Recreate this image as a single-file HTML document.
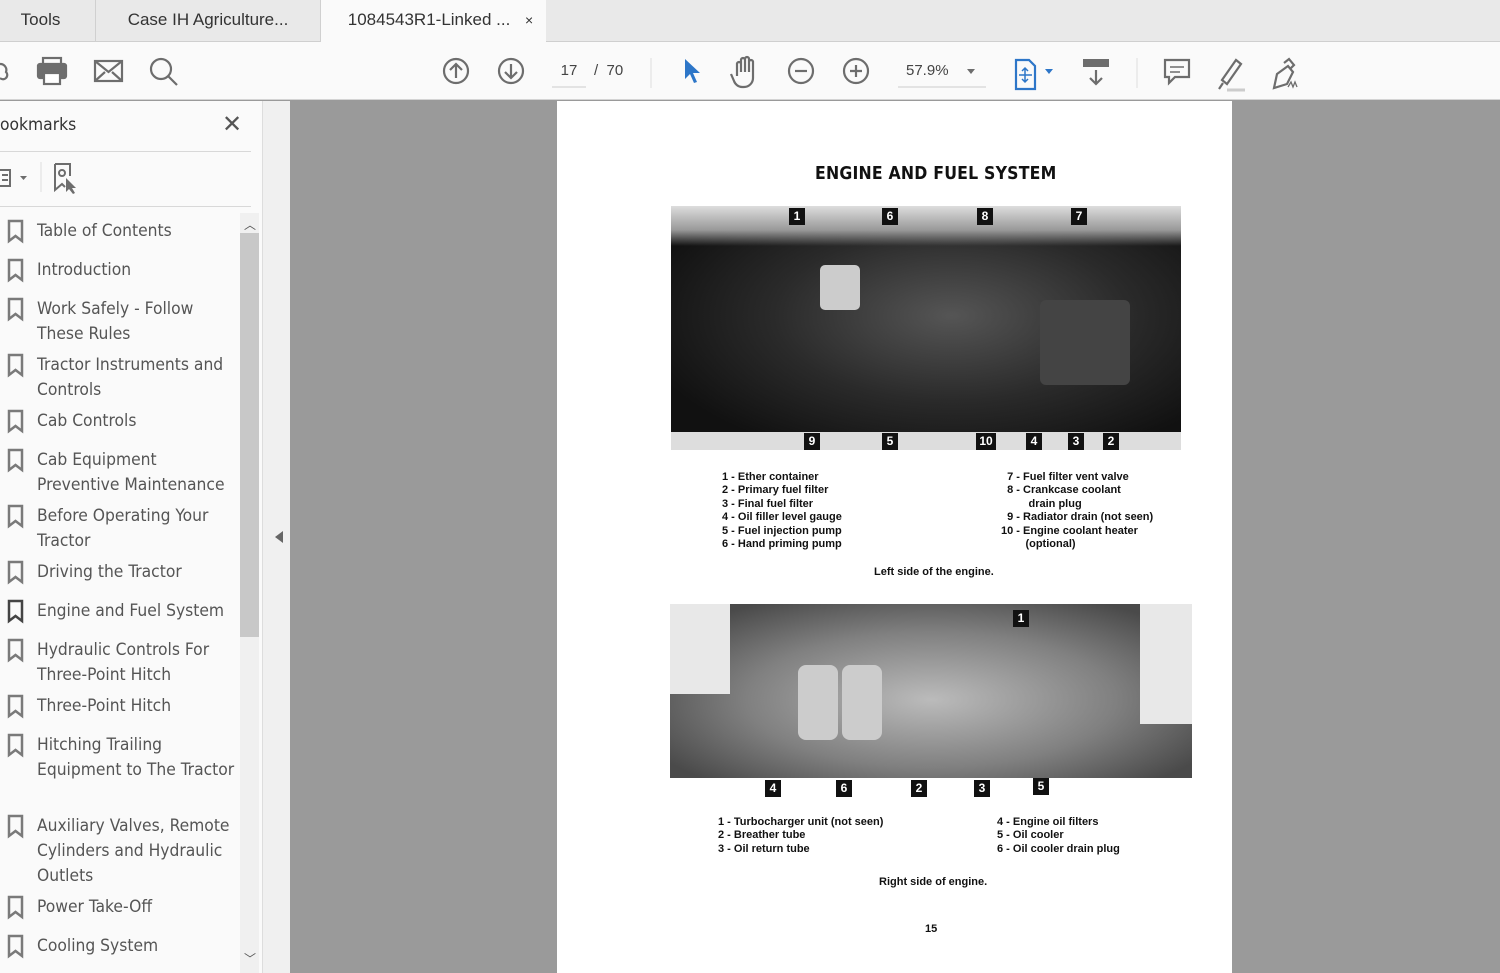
<!DOCTYPE html>
<html><head><meta charset="utf-8"><style>
*{margin:0;padding:0;box-sizing:border-box}
body{width:1500px;height:973px;overflow:hidden;background:#9a9a9a;font-family:"Liberation Sans",sans-serif;position:relative}
.abs{position:absolute}
#tabs{left:0;top:0;width:1500px;height:42px;background:#e9e9e9;border-bottom:1px solid #cfcfcf}
.tab{top:0;height:42px;font-size:17px;color:#333;line-height:40px;text-align:center}
#tool{left:0;top:42px;width:1500px;height:58px;background:#fafafa;border-bottom:1px solid #d4d4d4}
#side{left:0;top:101px;width:262px;height:872px;background:#fafafa}
#div{left:262px;top:101px;width:28px;height:872px;background:#f0f0f0;border-left:1px solid #ddd}
.bm{left:37px;font-size:17.3px;color:#555;line-height:25px;font-family:"DejaVu Sans Condensed","Liberation Sans",sans-serif;white-space:nowrap}
#page{left:557px;top:101px;width:675px;height:872px;background:#fff}
.cap{font-size:11px;font-weight:bold;color:#111;line-height:13.4px;white-space:pre;font-family:"Liberation Sans",sans-serif}
.num{width:16px;height:17px;background:#111;color:#fff;font-size:12px;font-weight:bold;text-align:center;line-height:17px}
</style></head><body>
<div id="tabs" class="abs"></div>
<div class="abs tab" style="left:0;width:96px;border-right:1px solid #d0d0d0;padding-right:14px">Tools</div>
<div class="abs tab" style="left:96px;width:225px;border-right:1px solid #d0d0d0">Case IH Agriculture...</div>
<div class="abs tab" style="left:321px;width:225px;background:#fafafa;height:43px;padding-left:14px">1084543R1-Linked ... <span style="font-size:14px;margin-left:10px">×</span></div>
<div id="tool" class="abs"></div>
<svg class="abs" style="left:0;top:42px" width="1500" height="58" fill="none" stroke="#6d6d6d" stroke-width="2.2">
<path d="M0 22 a6 6 0 0 1 6 8 a4 4 0 0 1 -6 6"/>
<rect x="38" y="22" width="28" height="14" rx="2" fill="#6d6d6d"/><rect x="43" y="16" width="18" height="7"/><rect x="44" y="31" width="16" height="11" fill="#fff"/>
<rect x="95" y="19" width="27" height="20"/><path d="M95 19 l13.5 11 l13.5 -11 M95 39 l10 -9 M122 39 l-10 -9"/>
<circle cx="161" cy="27" r="10"/><path d="M168 34 l9 9"/>
<circle cx="456" cy="29" r="12"/><path d="M456 36 v-14 M450 28 l6 -6 l6 6"/>
<circle cx="511" cy="29" r="12"/><path d="M511 22 v14 M505 30 l6 6 l6 -6"/>
<path d="M552 45 h34 M898 45 h88" stroke="#ccc" stroke-width="1"/>
<path d="M651 16 v30 M1137 16 v30" stroke="#ddd" stroke-width="1"/>
<path d="M685 17 l0 20 l5 -5 l4 9 l3 -1 l-4 -9 l7 0 z" fill="#2d76c8" stroke="none"/>
<path d="M737 34 v-12 a2 2 0 0 1 4 0 v8 v-12 a2 2 0 0 1 4 0 v12 v-13 a2 2 0 0 1 4 0 v13 v-10 a2 2 0 0 1 4 0 v16 a9 9 0 0 1 -9 9 h-2 a9 9 0 0 1 -8 -6 l-3 -7"/>
<circle cx="801" cy="29" r="12"/><path d="M795 29 h12"/>
<circle cx="856" cy="29" r="12"/><path d="M850 29 h12 M856 23 v12"/>
<path d="M967 27 h8 l-4 5 z" fill="#6d6d6d" stroke="none"/>
<path d="M1016 18 h13 l6 6 v23 h-19 z" stroke="#2d76c8"/><path d="M1025 26 v14 M1019 33 h13 M1022 29 l3 -3 l3 3 M1022 37 l3 3 l3 -3" stroke="#2d76c8" stroke-width="1.5"/>
<path d="M1045 27 h8 l-4 5 z" fill="#2d76c8" stroke="none"/>
<rect x="1083" y="17" width="26" height="8" fill="#6d6d6d" stroke="none"/><path d="M1096 28 v14 M1090 36 l6 6 l6 -6"/>
<path d="M1165 18 h24 v17 h-14 l-6 6 v-6 h-4 z"/><path d="M1170 25 h14 M1170 30 h10" stroke-width="1.5"/>
<path d="M1222 38 l14 -20 l5 4 l-14 20 z M1219 47 l4 -6"/><path d="M1227 48 h18" stroke="#ccc" stroke-width="3"/>
<path d="M1274 46 l3 -14 l11 -8 l5 6 l-6 12 z M1284 21 l5 -4 l5 6 -4 4"/><path d="M1288 45 l3 -5 l2 5 l2 -5 l2 5" stroke-width="1.3"/>
</svg>
<div class="abs" style="left:552px;top:62px;width:34px;font-size:15px;color:#444;text-align:center">17</div>
<div class="abs" style="left:594px;top:62px;font-size:15px;color:#444">/ &nbsp;70</div>
<div class="abs" style="left:906px;top:62px;font-size:15px;color:#444">57.9%</div>

<div id="side" class="abs"></div>
<div class="abs" style="left:0;top:115px;font-size:17.3px;color:#333;font-family:'DejaVu Sans Condensed',sans-serif">ookmarks</div>
<div class="abs" style="left:222px;top:110px;font-size:24px;color:#555">✕</div>
<div class="abs" style="left:0;top:151px;width:251px;height:1px;background:#d8d8d8"></div>
<div class="abs" style="left:0;top:206px;width:251px;height:1px;background:#d8d8d8"></div>
<svg class="abs" style="left:0;top:160px" width="90" height="36" fill="none" stroke="#6d6d6d" stroke-width="2">
<path d="M0 10 h10 v16 h-10 M2 15 h6 M2 20 h6"/><path d="M20 16 h7 l-3.5 4 z" fill="#6d6d6d" stroke="none"/>
<path d="M41 2 v30" stroke="#ddd" stroke-width="1"/>
<path d="M55 4 h15 v12 M55 4 v26 l7 -6 l3 3"/><circle cx="62" cy="13" r="3"/><path d="M66 18 l0 14 l3 -3 l4 5 l2 -1 l-3 -5 l4 0 z" fill="#6d6d6d" stroke="none"/>
</svg>
<div class="abs" style="left:240px;top:213px;width:19px;height:760px;background:#f0f0f0"></div>
<div class="abs" style="left:240px;top:233px;width:19px;height:404px;background:#c8c8c8"></div>
<div class="abs" style="left:244px;top:216px;font-size:12px;color:#555">︿</div>
<div class="abs" style="left:244px;top:950px;font-size:12px;color:#555">﹀</div>

<svg class="abs" style="left:0;top:0" width="30" height="973" fill="none" stroke="#7a7a7a" stroke-width="2.5">
<path id="b" d="M9 221 h13 v20 l-6.5 -5 l-6.5 5 z"/>
<use href="#b" y="39"/><use href="#b" y="78"/><use href="#b" y="134"/><use href="#b" y="190"/><use href="#b" y="229"/><use href="#b" y="285"/><use href="#b" y="341"/><use href="#b" y="380" stroke="#444"/><use href="#b" y="419"/><use href="#b" y="475"/><use href="#b" y="514"/><use href="#b" y="595"/><use href="#b" y="676"/><use href="#b" y="715"/>
</svg>
<div class="abs bm" style="top:219px">Table of Contents</div>
<div class="abs bm" style="top:258px">Introduction</div>
<div class="abs bm" style="top:297px">Work Safely - Follow<br>These Rules</div>
<div class="abs bm" style="top:353px">Tractor Instruments and<br>Controls</div>
<div class="abs bm" style="top:409px">Cab Controls</div>
<div class="abs bm" style="top:448px">Cab Equipment<br>Preventive Maintenance</div>
<div class="abs bm" style="top:504px">Before Operating Your<br>Tractor</div>
<div class="abs bm" style="top:560px">Driving the Tractor</div>
<div class="abs bm" style="top:599px">Engine and Fuel System</div>
<div class="abs bm" style="top:638px">Hydraulic Controls For<br>Three-Point Hitch</div>
<div class="abs bm" style="top:694px">Three-Point Hitch</div>
<div class="abs bm" style="top:733px">Hitching Trailing<br>Equipment to The Tractor</div>
<div class="abs bm" style="top:814px">Auxiliary Valves, Remote<br>Cylinders and Hydraulic<br>Outlets</div>
<div class="abs bm" style="top:895px">Power Take-Off</div>
<div class="abs bm" style="top:934px">Cooling System</div>

<div id="div" class="abs"></div>
<svg class="abs" style="left:274px;top:531px" width="10" height="12"><path d="M9 0 v12 l-8 -6 z" fill="#666"/></svg>

<div id="page" class="abs"></div>
<div class="abs" style="left:815px;top:164px;font-size:17.5px;font-weight:bold;color:#111;font-family:'DejaVu Sans Condensed',sans-serif;letter-spacing:0.2px">ENGINE AND FUEL SYSTEM</div>
<div class="abs" style="left:671px;top:206px;width:510px;height:244px;background:radial-gradient(ellipse at 55% 45%,#555 0%,#2a2a2a 45%,#111 80%);"></div>
<div class="abs" style="left:671px;top:206px;width:510px;height:40px;background:linear-gradient(#ddd,#999 60%,transparent)"></div>
<div class="abs" style="left:1040px;top:300px;width:90px;height:85px;background:#444;border-radius:6px"></div>
<div class="abs" style="left:820px;top:265px;width:40px;height:45px;background:#ccc;border-radius:5px"></div>
<div class="abs" style="left:671px;top:432px;width:510px;height:18px;background:#ddd"></div>
<div class="abs num" style="left:789px;top:208px">1</div><div class="abs num" style="left:882px;top:208px">6</div><div class="abs num" style="left:977px;top:208px">8</div><div class="abs num" style="left:1071px;top:208px">7</div>
<div class="abs num" style="left:804px;top:433px">9</div><div class="abs num" style="left:882px;top:433px">5</div><div class="abs num" style="left:976px;top:433px;width:20px">10</div><div class="abs num" style="left:1026px;top:433px">4</div><div class="abs num" style="left:1068px;top:433px">3</div><div class="abs num" style="left:1103px;top:433px">2</div>
<div class="abs cap" style="left:722px;top:471px">1 - Ether container
2 - Primary fuel filter
3 - Final fuel filter
4 - Oil filler level gauge
5 - Fuel injection pump
6 - Hand priming pump</div>
<div class="abs cap" style="left:1001px;top:471px">  7 - Fuel filter vent valve
  8 - Crankcase coolant
         drain plug
  9 - Radiator drain (not seen)
10 - Engine coolant heater
        (optional)</div>
<div class="abs cap" style="left:874px;top:566px">Left side of the engine.</div>

<div class="abs" style="left:670px;top:604px;width:522px;height:174px;background:radial-gradient(ellipse at 50% 55%,#bbb 0%,#808080 50%,#4a4a4a 85%)"></div>
<div class="abs" style="left:670px;top:604px;width:60px;height:90px;background:#e8e8e8"></div>
<div class="abs" style="left:1140px;top:604px;width:52px;height:120px;background:#e8e8e8"></div>
<div class="abs" style="left:798px;top:665px;width:40px;height:75px;background:#ccc;border-radius:8px"></div>
<div class="abs" style="left:842px;top:665px;width:40px;height:75px;background:#ccc;border-radius:8px"></div>
<div class="abs num" style="left:1013px;top:610px">1</div>
<div class="abs num" style="left:765px;top:780px">4</div><div class="abs num" style="left:836px;top:780px">6</div><div class="abs num" style="left:911px;top:780px">2</div><div class="abs num" style="left:974px;top:780px">3</div><div class="abs num" style="left:1033px;top:778px">5</div>
<div class="abs cap" style="left:718px;top:816px">1 - Turbocharger unit (not seen)
2 - Breather tube
3 - Oil return tube</div>
<div class="abs cap" style="left:997px;top:816px">4 - Engine oil filters
5 - Oil cooler
6 - Oil cooler drain plug</div>
<div class="abs cap" style="left:879px;top:876px">Right side of engine.</div>
<div class="abs cap" style="left:925px;top:923px">15</div>
</body></html>
